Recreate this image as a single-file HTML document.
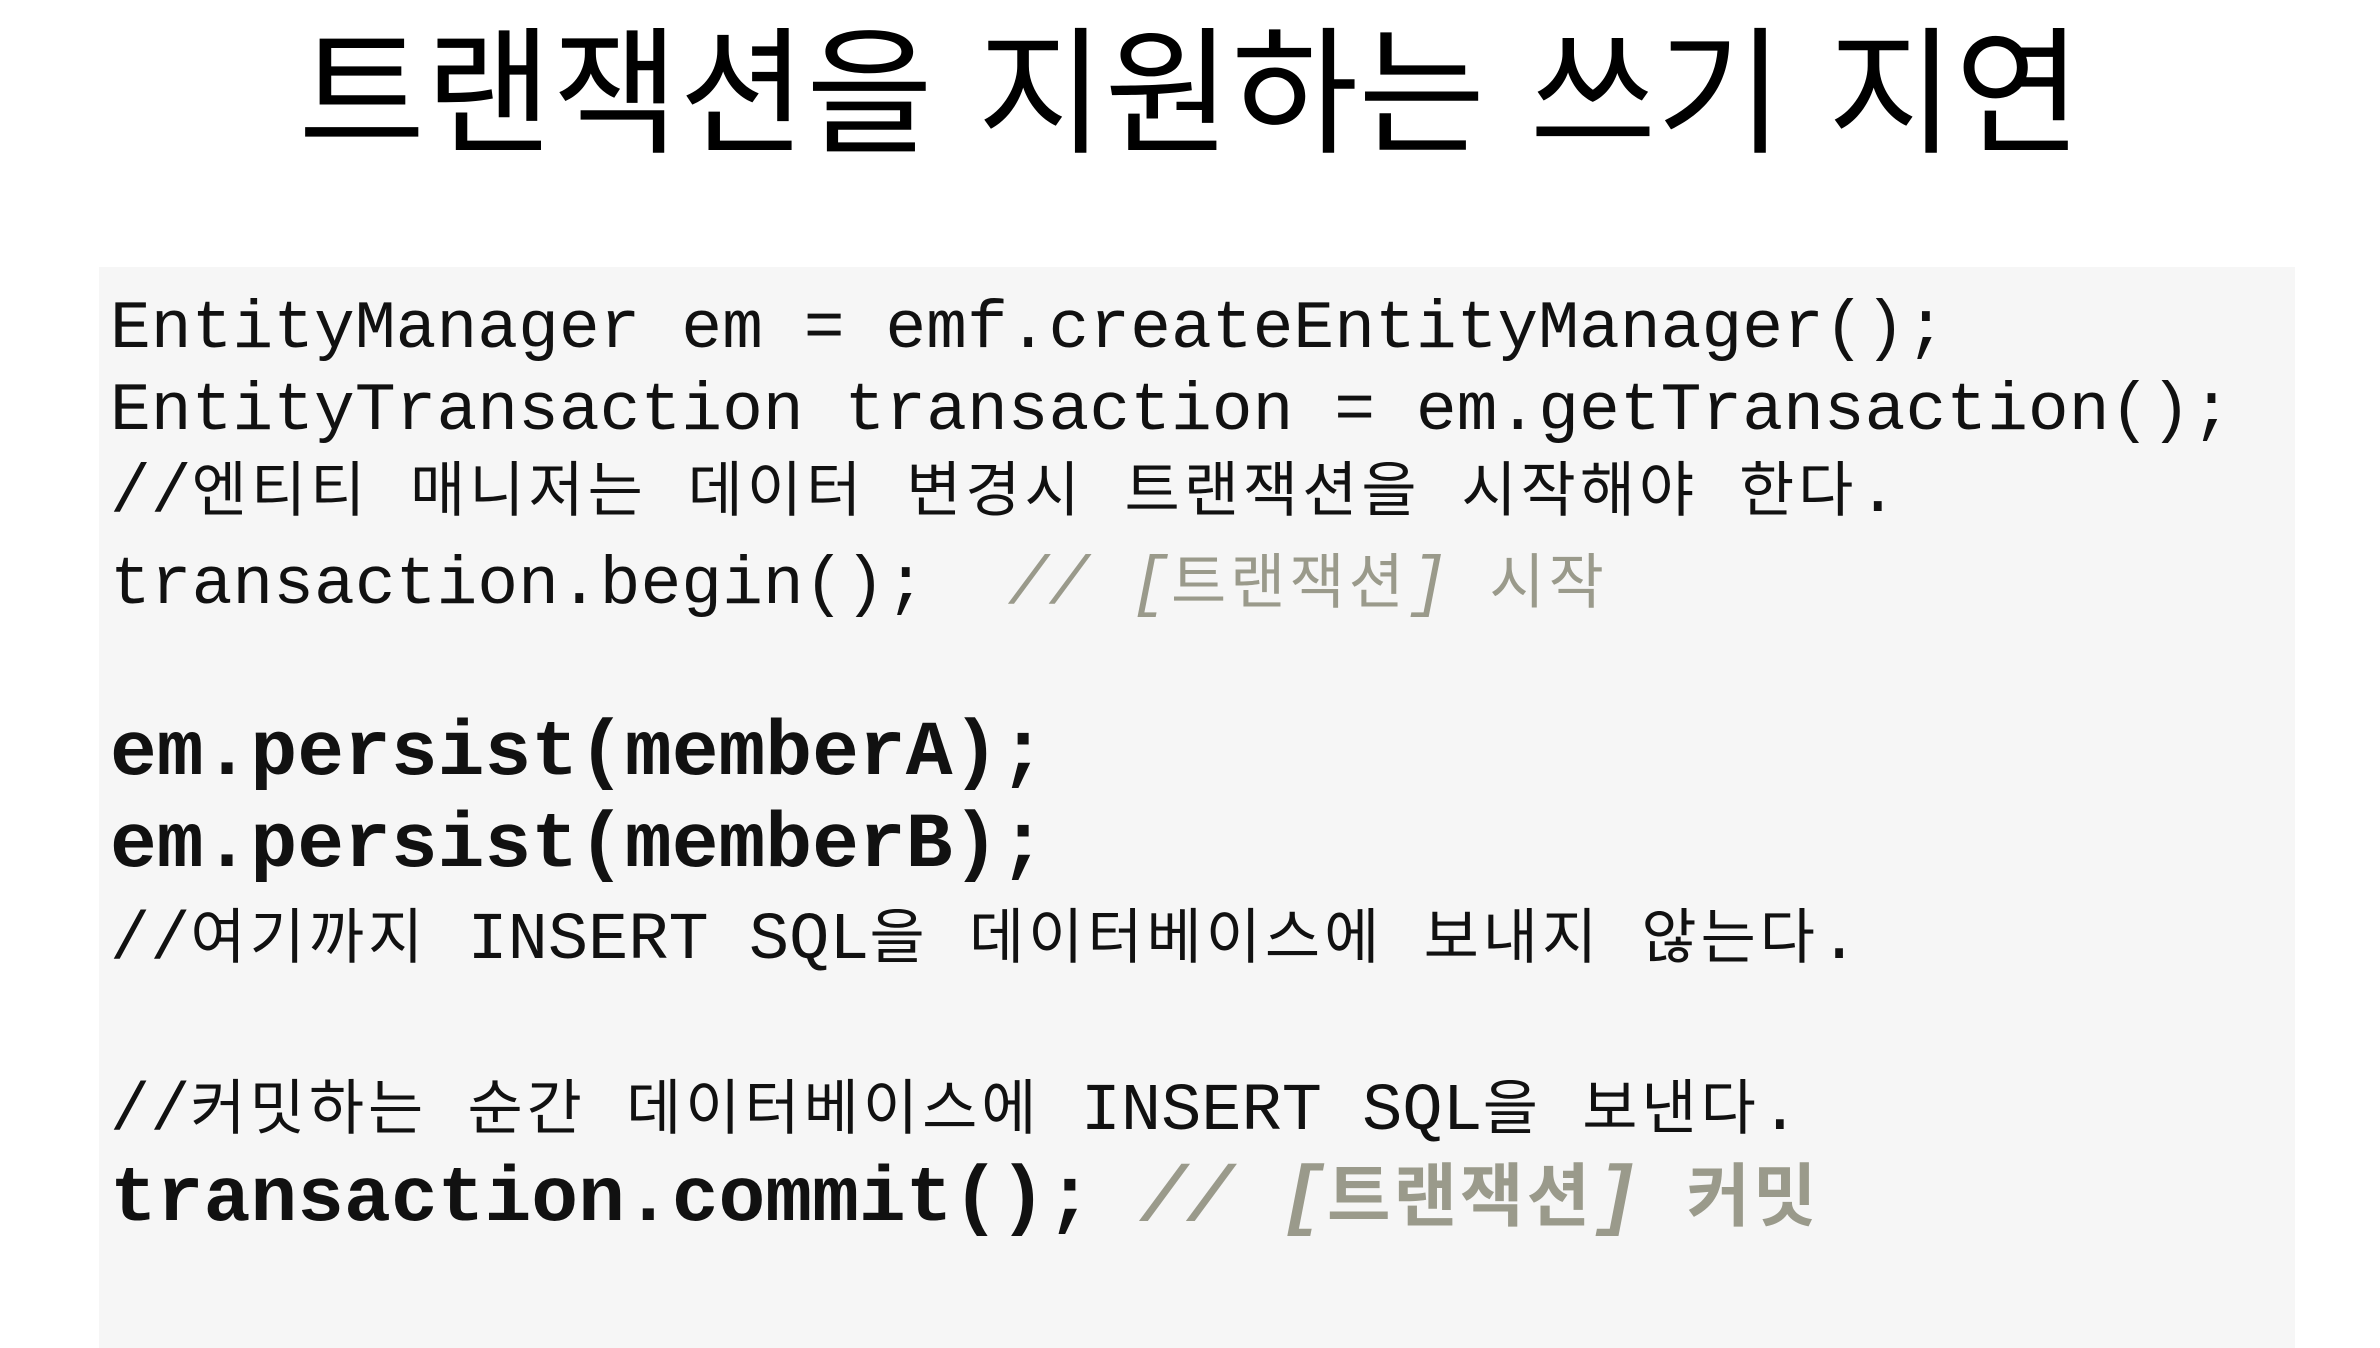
<!DOCTYPE html>
<html><head><meta charset="utf-8"><style>
html,body{margin:0;padding:0;background:#fff;width:2380px;height:1348px;overflow:hidden;position:relative}
.t{position:absolute;left:0;width:2380px;text-align:center;top:26px;font:138px/1 "Liberation Sans","Noto Sans CJK KR",sans-serif;color:#000;word-spacing:6px}
.box{position:absolute;left:99px;top:267px;width:2196px;height:1081px;background:#f6f6f6}
.l{position:absolute;left:110px;font-family:"Liberation Mono","Noto Sans CJK KR",monospace;line-height:1;color:#111;white-space:pre}
.k{font-family:"Noto Sans CJK KR",sans-serif;font-size:60px;letter-spacing:4px}
.b{font-weight:bold}
.g{color:#9a9a8b}
.i{font-style:italic}
</style></head><body>
<div class="t">트랜잭션을 지원하는 쓰기 지연</div>
<div class="box"></div>
<div class="l" style="top:296px;font-size:68px">EntityManager em = emf.createEntityManager();</div>
<div class="l" style="top:378px;font-size:68px">EntityTransaction transaction = em.getTransaction();</div>
<div class="l" style="top:456px;font-size:68px">//<span class="k">엔티티</span> <span class="k">매니저는</span> <span class="k">데이터</span> <span class="k">변경시</span> <span class="k">트랜잭션을</span> <span class="k">시작해야</span> <span class="k">한다</span>.</div>
<div class="l" style="top:548px;font-size:68px">transaction.begin();  <span class="g"><span class="i">// [</span><span class="k">트랜잭션</span><span class="i">]</span> <span class="k">시작</span></span></div>
<div class="l b" style="top:715px;font-size:78px">em.persist(memberA);</div>
<div class="l b" style="top:807px;font-size:78px">em.persist(memberB);</div>
<div class="l" style="top:903px;font-size:67px">//<span class="k">여기까지</span> INSERT SQL<span class="k">을</span> <span class="k">데이터베이스에</span> <span class="k">보내지</span> <span class="k">않는다</span>.</div>
<div class="l" style="top:1074px;font-size:67px">//<span class="k">커밋하는</span> <span class="k">순간</span> <span class="k">데이터베이스에</span> INSERT SQL<span class="k">을</span> <span class="k">보낸다</span>.</div>
<div class="l b" style="top:1156px;font-size:78px">transaction.commit(); <span class="g"><span class="i">// [</span><span class="k" style="font-size:69px;letter-spacing:3px">트랜잭션</span><span class="i">]</span> <span class="k" style="font-size:69px;letter-spacing:3px">커밋</span></span></div>
</body></html>
